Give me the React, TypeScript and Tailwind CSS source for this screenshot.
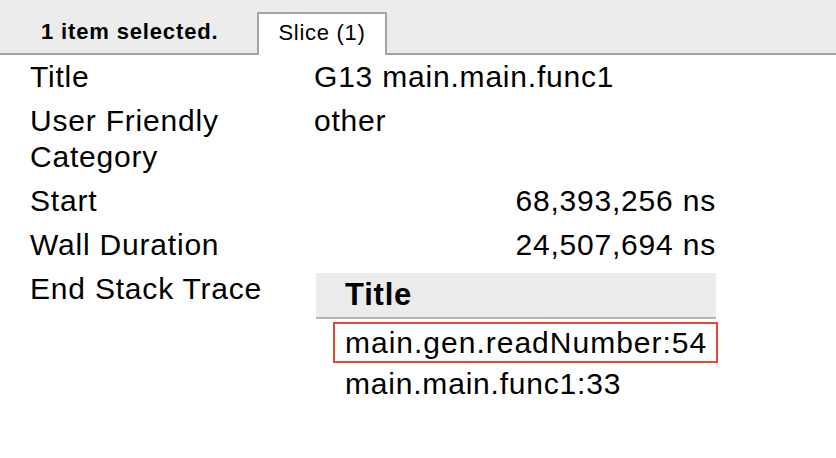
const font = { fontFamily: '"Liberation Sans", Arial, sans-serif' };

function Row({ label, children }: { label: string; children: React.ReactNode }) {
  return (
    <div className="flex py-1 leading-[36px]">
      <div className="w-[284px] shrink-0 pr-4">{label}</div>
      <div className="w-[402px] shrink-0">{children}</div>
    </div>
  );
}

export default function App() {
  return (
    <div className="w-[836px] h-[458px] bg-white text-black overflow-hidden" style={font}>
      <div className="h-[55px] bg-[#ececec] border-b-2 border-[#a4a4a4] flex items-end">
        <div className="pl-[41px] w-[257px] h-[53px] flex items-center font-bold text-[22px] tracking-[0.85px] pt-[10px]">
          1 item selected.
        </div>
        <div className="w-[130px] h-[43px] -mb-[2px] bg-white border-2 border-b-0 border-[#a4a4a4] flex items-center justify-center text-[22px] tracking-[0.7px] pb-[5px]">
          Slice (1)
        </div>
      </div>

      <div className="pl-[30px] text-[30px] tracking-[0.8px]">
        <Row label="Title">G13 main.main.func1</Row>
        <Row label="User Friendly Category">other</Row>
        <Row label="Start">
          <div className="text-right">68,393,256 ns</div>
        </Row>
        <Row label="Wall Duration">
          <div className="text-right">24,507,694 ns</div>
        </Row>
        <Row label="End Stack Trace">
          <div className="ml-[2px] mt-[2px] w-[400px]">
            <div className="bg-[#ececec] border-b-2 border-[#b4b4b4] h-[46px] flex items-center pl-[29px] font-bold text-[31px]">
              Title
            </div>
            <div className="h-[44px] flex items-end pl-[17px]">
              <span className="inline-block border-2 border-[#e5492f] px-[10px] h-[41px] leading-[37px] w-[385px] tracking-[1px]">
                main.gen.readNumber:54
              </span>
            </div>
            <div className="h-[42px] flex items-center pl-[29px]">main.main.func1:33</div>
          </div>
        </Row>
      </div>
    </div>
  );
}
